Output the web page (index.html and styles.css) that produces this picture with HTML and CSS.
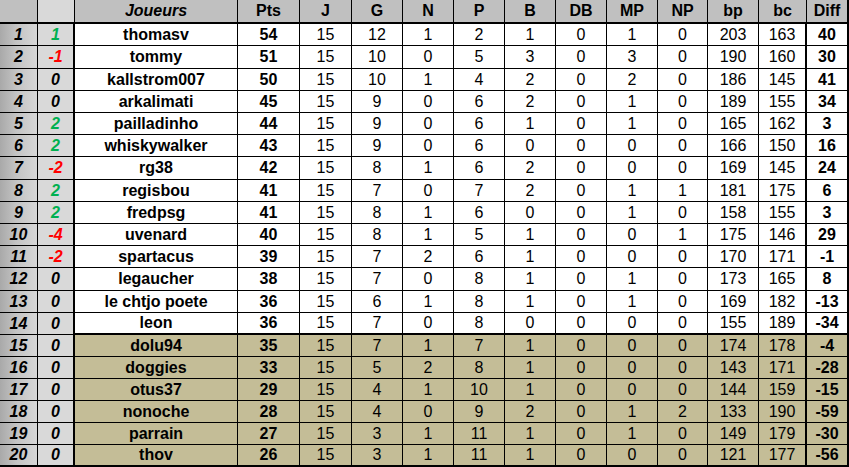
FILE: index.html
```html
<!DOCTYPE html>
<html lang="fr">
<head>
<meta charset="utf-8">
<title>Classement</title>
<link rel="stylesheet" href="styles.css">
</head>
<body>
<table class="standings">
  <colgroup>
    <col class="c-rank"><col class="c-mv"><col class="c-name"><col class="c-pts">
    <col class="c-j"><col class="c-51"><col class="c-51"><col class="c-51"><col class="c-51">
    <col class="c-51"><col class="c-51"><col class="c-50"><col class="c-51"><col class="c-bc"><col class="c-diff">
  </colgroup>
  <thead>
    <tr>
      <th class="rank"></th><th class="mv"></th><th class="name">Joueurs</th><th>Pts</th>
      <th>J</th><th>G</th><th>N</th><th>P</th><th>B</th><th>DB</th><th>MP</th><th>NP</th><th>bp</th><th class="bc">bc</th><th class="diff">Diff</th>
    </tr>
  </thead>
  <tbody>
    <tr><td class="rank">1</td><td class="mv up">1</td><td class="name">thomasv</td><td class="pts">54</td><td>15</td><td>12</td><td>1</td><td>2</td><td>1</td><td>0</td><td>1</td><td>0</td><td>203</td><td class="bc">163</td><td class="diff">40</td></tr>
    <tr class="tall"><td class="rank">2</td><td class="mv down">-1</td><td class="name">tommy</td><td class="pts">51</td><td>15</td><td>10</td><td>0</td><td>5</td><td>3</td><td>0</td><td>3</td><td>0</td><td>190</td><td class="bc">160</td><td class="diff">30</td></tr>
    <tr><td class="rank">3</td><td class="mv">0</td><td class="name">kallstrom007</td><td class="pts">50</td><td>15</td><td>10</td><td>1</td><td>4</td><td>2</td><td>0</td><td>2</td><td>0</td><td>186</td><td class="bc">145</td><td class="diff">41</td></tr>
    <tr><td class="rank">4</td><td class="mv">0</td><td class="name">arkalimati</td><td class="pts">45</td><td>15</td><td>9</td><td>0</td><td>6</td><td>2</td><td>0</td><td>1</td><td>0</td><td>189</td><td class="bc">155</td><td class="diff">34</td></tr>
    <tr><td class="rank">5</td><td class="mv up">2</td><td class="name">pailladinho</td><td class="pts">44</td><td>15</td><td>9</td><td>0</td><td>6</td><td>1</td><td>0</td><td>1</td><td>0</td><td>165</td><td class="bc">162</td><td class="diff">3</td></tr>
    <tr><td class="rank">6</td><td class="mv up">2</td><td class="name">whiskywalker</td><td class="pts">43</td><td>15</td><td>9</td><td>0</td><td>6</td><td>0</td><td>0</td><td>0</td><td>0</td><td>166</td><td class="bc">150</td><td class="diff">16</td></tr>
    <tr class="tall"><td class="rank">7</td><td class="mv down">-2</td><td class="name">rg38</td><td class="pts">42</td><td>15</td><td>8</td><td>1</td><td>6</td><td>2</td><td>0</td><td>0</td><td>0</td><td>169</td><td class="bc">145</td><td class="diff">24</td></tr>
    <tr><td class="rank">8</td><td class="mv up">2</td><td class="name">regisbou</td><td class="pts">41</td><td>15</td><td>7</td><td>0</td><td>7</td><td>2</td><td>0</td><td>1</td><td>1</td><td>181</td><td class="bc">175</td><td class="diff">6</td></tr>
    <tr><td class="rank">9</td><td class="mv up">2</td><td class="name">fredpsg</td><td class="pts">41</td><td>15</td><td>8</td><td>1</td><td>6</td><td>0</td><td>0</td><td>1</td><td>0</td><td>158</td><td class="bc">155</td><td class="diff">3</td></tr>
    <tr><td class="rank">10</td><td class="mv down">-4</td><td class="name">uvenard</td><td class="pts">40</td><td>15</td><td>8</td><td>1</td><td>5</td><td>1</td><td>0</td><td>0</td><td>1</td><td>175</td><td class="bc">146</td><td class="diff">29</td></tr>
    <tr><td class="rank">11</td><td class="mv down">-2</td><td class="name">spartacus</td><td class="pts">39</td><td>15</td><td>7</td><td>2</td><td>6</td><td>1</td><td>0</td><td>0</td><td>0</td><td>170</td><td class="bc">171</td><td class="diff">-1</td></tr>
    <tr class="tall"><td class="rank">12</td><td class="mv">0</td><td class="name">legaucher</td><td class="pts">38</td><td>15</td><td>7</td><td>0</td><td>8</td><td>1</td><td>0</td><td>1</td><td>0</td><td>173</td><td class="bc">165</td><td class="diff">8</td></tr>
    <tr><td class="rank">13</td><td class="mv">0</td><td class="name">le chtjo poete</td><td class="pts">36</td><td>15</td><td>6</td><td>1</td><td>8</td><td>1</td><td>0</td><td>1</td><td>0</td><td>169</td><td class="bc">182</td><td class="diff">-13</td></tr>
    <tr class="cut"><td class="rank">14</td><td class="mv">0</td><td class="name">leon</td><td class="pts">36</td><td>15</td><td>7</td><td>0</td><td>8</td><td>0</td><td>0</td><td>0</td><td>0</td><td>155</td><td class="bc">189</td><td class="diff">-34</td></tr>
    <tr class="rel"><td class="rank">15</td><td class="mv">0</td><td class="name">dolu94</td><td class="pts">35</td><td>15</td><td>7</td><td>1</td><td>7</td><td>1</td><td>0</td><td>0</td><td>0</td><td>174</td><td class="bc">178</td><td class="diff">-4</td></tr>
    <tr class="rel"><td class="rank">16</td><td class="mv">0</td><td class="name">doggies</td><td class="pts">33</td><td>15</td><td>5</td><td>2</td><td>8</td><td>1</td><td>0</td><td>0</td><td>0</td><td>143</td><td class="bc">171</td><td class="diff">-28</td></tr>
    <tr class="rel"><td class="rank">17</td><td class="mv">0</td><td class="name">otus37</td><td class="pts">29</td><td>15</td><td>4</td><td>1</td><td>10</td><td>1</td><td>0</td><td>0</td><td>0</td><td>144</td><td class="bc">159</td><td class="diff">-15</td></tr>
    <tr class="rel"><td class="rank">18</td><td class="mv">0</td><td class="name">nonoche</td><td class="pts">28</td><td>15</td><td>4</td><td>0</td><td>9</td><td>2</td><td>0</td><td>1</td><td>2</td><td>133</td><td class="bc">190</td><td class="diff">-59</td></tr>
    <tr class="rel"><td class="rank">19</td><td class="mv">0</td><td class="name">parrain</td><td class="pts">27</td><td>15</td><td>3</td><td>1</td><td>11</td><td>1</td><td>0</td><td>1</td><td>0</td><td>149</td><td class="bc">179</td><td class="diff">-30</td></tr>
    <tr class="rel last"><td class="rank">20</td><td class="mv">0</td><td class="name">thov</td><td class="pts">26</td><td>15</td><td>3</td><td>1</td><td>11</td><td>1</td><td>0</td><td>0</td><td>0</td><td>121</td><td class="bc">177</td><td class="diff">-56</td></tr>
  </tbody>
</table>
</body>
</html>
```
FILE: styles.css
```css
html, body {
  margin: 0;
  padding: 0;
  background: #ffffff;
}

.standings {
  width: 849px;
  table-layout: fixed;
  border-collapse: separate;
  border-spacing: 0;
  font-family: "Liberation Sans", Arial, sans-serif;
  font-size: 16px;
  color: #000;
}

.c-rank { width: 38px; }
.c-mv { width: 37px; }
.c-name { width: 163px; }
.c-pts { width: 62px; }
.c-j { width: 52px; }
.c-51 { width: 51px; }
.c-50 { width: 50px; }
.c-bc { width: 48px; }
.c-diff { width: 42px; }

.standings th,
.standings td {
  box-sizing: border-box;
  padding: 0;
  text-align: center;
  vertical-align: middle;
  white-space: nowrap;
  overflow: hidden;
  line-height: 18px;
  border-right: 1px solid #000;
  border-bottom: 1px solid #000;
}

.standings thead tr { height: 24px; }
.standings tbody tr { height: 22px; }
.standings tbody tr.tall { height: 23px; }

.standings th {
  background: #c0c0c0;
  font-weight: bold;
  border-bottom: 2px solid #000;
}

.standings th.mv { background: #d9d9d9; }
.standings th.name { font-style: italic; }
.standings th.diff { border-right: 2px solid #000; }

.standings td {
  background: #ffffff;
  font-weight: normal;
}

.standings td.rank {
  background: linear-gradient(to right, #a9a9a9 0%, #c4c4c4 45%, #d6d6d6 100%);
  font-weight: bold;
  font-style: italic;
}

.standings td.mv {
  background: #d9d9d9;
  font-weight: bold;
  font-style: italic;
  border-right: 2px solid #000;
}

.standings td.up { color: #00b050; }
.standings td.down { color: #ff0000; }

.standings td.name,
.standings td.pts,
.standings td.diff { font-weight: bold; }

.standings td.bc { border-right: 2px solid #000; }
.standings td.diff { border-right: 2px solid #000; }

.standings tr.rel td { background: #c4bd97; }
.standings tr.rel td.rank {
  background: linear-gradient(to right, #a9a9a9 0%, #c4c4c4 45%, #d6d6d6 100%);
}
.standings tr.rel td.mv { background: #d9d9d9; }

.standings tr.cut td { border-bottom: 2px solid #000; }
.standings tr.cut td.rank,
.standings tr.cut td.mv { border-bottom: 1px solid #000; }

.standings tr.last td { border-bottom: 2px solid #000; }
```
